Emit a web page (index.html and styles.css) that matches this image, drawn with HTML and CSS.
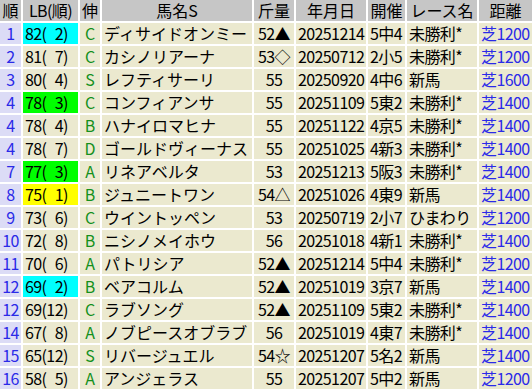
FILE: index.html
```html
<!DOCTYPE html>
<html lang="ja">
<head>
<meta charset="utf-8">
<link rel="stylesheet" href="styles.css">
</head>
<body>
<table class="tbl">
<colgroup>
<col class="w-rank"><col class="w-lb"><col class="w-nobi"><col class="w-name"><col class="w-kin"><col class="w-date"><col class="w-kai"><col class="w-race"><col class="w-dist">
</colgroup>
<thead>
<tr><th>順</th><th class="lbh">LB(順)</th><th>伸</th><th>馬名S</th><th>斤量</th><th>年月日</th><th>開催</th><th>レース名</th><th>距離</th></tr>
</thead>
<tbody>
<tr><td class="rank">1</td><td class="lb hl-cyan">82(&#x2007;2)</td><td class="nobi">C</td><td class="name">ディサイドオンミー</td><td class="kin">52▲</td><td class="date">20251214</td><td class="kai">5中4</td><td class="race">未勝利*</td><td class="dist">芝1200</td></tr>
<tr><td class="rank">2</td><td class="lb">81(&#x2007;7)</td><td class="nobi">C</td><td class="name">カシノリアーナ</td><td class="kin">53◇</td><td class="date">20250712</td><td class="kai">2小5</td><td class="race">未勝利*</td><td class="dist">芝1200</td></tr>
<tr><td class="rank">3</td><td class="lb">80(&#x2007;4)</td><td class="nobi">S</td><td class="name">レフティサーリ</td><td class="kin">55</td><td class="date">20250920</td><td class="kai">4中6</td><td class="race">新馬</td><td class="dist">芝1600</td></tr>
<tr><td class="rank">4</td><td class="lb hl-green">78(&#x2007;3)</td><td class="nobi">C</td><td class="name">コンフィアンサ</td><td class="kin">55</td><td class="date">20251109</td><td class="kai">5東2</td><td class="race">未勝利*</td><td class="dist">芝1400</td></tr>
<tr><td class="rank">4</td><td class="lb">78(&#x2007;4)</td><td class="nobi">B</td><td class="name">ハナイロマヒナ</td><td class="kin">55</td><td class="date">20251122</td><td class="kai">4京5</td><td class="race">未勝利*</td><td class="dist">芝1400</td></tr>
<tr><td class="rank">4</td><td class="lb">78(&#x2007;7)</td><td class="nobi">D</td><td class="name">ゴールドヴィーナス</td><td class="kin">55</td><td class="date">20251025</td><td class="kai">4新3</td><td class="race">未勝利*</td><td class="dist">芝1400</td></tr>
<tr><td class="rank">7</td><td class="lb hl-green">77(&#x2007;3)</td><td class="nobi">A</td><td class="name">リネアベルタ</td><td class="kin">53</td><td class="date">20251213</td><td class="kai">5阪3</td><td class="race">未勝利*</td><td class="dist">芝1400</td></tr>
<tr><td class="rank">8</td><td class="lb hl-yellow">75(&#x2007;1)</td><td class="nobi">B</td><td class="name">ジュニートワン</td><td class="kin">54△</td><td class="date">20251026</td><td class="kai">4東9</td><td class="race">新馬</td><td class="dist">芝1400</td></tr>
<tr><td class="rank">9</td><td class="lb">73(&#x2007;6)</td><td class="nobi">C</td><td class="name">ウイントッペン</td><td class="kin">53</td><td class="date">20250719</td><td class="kai">2小7</td><td class="race">ひまわり</td><td class="dist">芝1200</td></tr>
<tr><td class="rank">10</td><td class="lb">72(&#x2007;8)</td><td class="nobi">B</td><td class="name">ニシノメイホウ</td><td class="kin">56</td><td class="date">20251018</td><td class="kai">4新1</td><td class="race">未勝利*</td><td class="dist">芝1400</td></tr>
<tr><td class="rank">11</td><td class="lb">70(&#x2007;6)</td><td class="nobi">A</td><td class="name">パトリシア</td><td class="kin">52▲</td><td class="date">20251214</td><td class="kai">5中4</td><td class="race">未勝利*</td><td class="dist">芝1200</td></tr>
<tr><td class="rank">12</td><td class="lb hl-cyan">69(&#x2007;2)</td><td class="nobi">B</td><td class="name">ベアコルム</td><td class="kin">52▲</td><td class="date">20251019</td><td class="kai">3京7</td><td class="race">新馬</td><td class="dist">芝1400</td></tr>
<tr><td class="rank">12</td><td class="lb">69(12)</td><td class="nobi">C</td><td class="name">ラブソング</td><td class="kin">52▲</td><td class="date">20251109</td><td class="kai">5東2</td><td class="race">未勝利*</td><td class="dist">芝1400</td></tr>
<tr><td class="rank">14</td><td class="lb">67(&#x2007;8)</td><td class="nobi">A</td><td class="name">ノブピースオブラブ</td><td class="kin">56</td><td class="date">20251019</td><td class="kai">4東7</td><td class="race">未勝利*</td><td class="dist">芝1400</td></tr>
<tr><td class="rank">15</td><td class="lb">65(12)</td><td class="nobi">S</td><td class="name">リバージュエル</td><td class="kin">54☆</td><td class="date">20251207</td><td class="kai">5名2</td><td class="race">新馬</td><td class="dist">芝1400</td></tr>
<tr><td class="rank">16</td><td class="lb">58(&#x2007;5)</td><td class="nobi">A</td><td class="name">アンジェラス</td><td class="kin">55</td><td class="date">20251207</td><td class="kai">5中2</td><td class="race">新馬</td><td class="dist">芝1200</td></tr>
</tbody>
</table>
</body>
</html>
```
FILE: styles.css
```css
html, body {
  margin: 0;
  padding: 0;
  background: #ffffff;
}
body {
  font-family: "Noto Sans CJK JP", "Noto Sans", sans-serif;
  font-size: 16px;
  color: #000;
  overflow: hidden;
}
.tbl {
  border-collapse: separate;
  border-spacing: 2px;
  table-layout: fixed;
  width: 536px;
  margin: -2px;
}
.w-rank { width: 21px; }
.w-lb { width: 55px; }
.w-nobi { width: 20px; }
.w-name { width: 150px; }
.w-kin { width: 40px; }
.w-date { width: 70px; }
.w-kai { width: 37px; }
.w-race { width: 70px; }
.w-dist { width: 53px; }

.tbl th, .tbl td {
  height: 21px;
  line-height: 21px;
  padding: 0;
  white-space: pre;
  font-weight: normal;
}
.tbl th {
  background: #c6c6c6;
  text-align: center;
}
.tbl th.lbh {
  letter-spacing: -0.6px;
}
.tbl td {
  background: #ebe9cf;
  text-align: left;
  padding-left: 2px;
}
.tbl td.rank,
.tbl td.lb,
.tbl td.kin,
.tbl td.date,
.tbl td.kai,
.tbl td.race,
.tbl td.dist {
  letter-spacing: -0.6px;
}
.tbl td.rank {
  background: #dcdcf6;
  color: #2a2ae8;
  text-align: center;
  padding: 0;
}
.tbl td.nobi {
  color: #14901c;
  text-align: center;
  padding: 0;
}
.tbl td.kin {
  text-align: center;
  padding: 0;
}
.tbl td.dist {
  color: #2a2ae8;
}
.tbl td.hl-cyan { background: #00ffff; }
.tbl td.hl-green { background: #00ff00; }
.tbl td.hl-yellow { background: #ffff00; }
```
